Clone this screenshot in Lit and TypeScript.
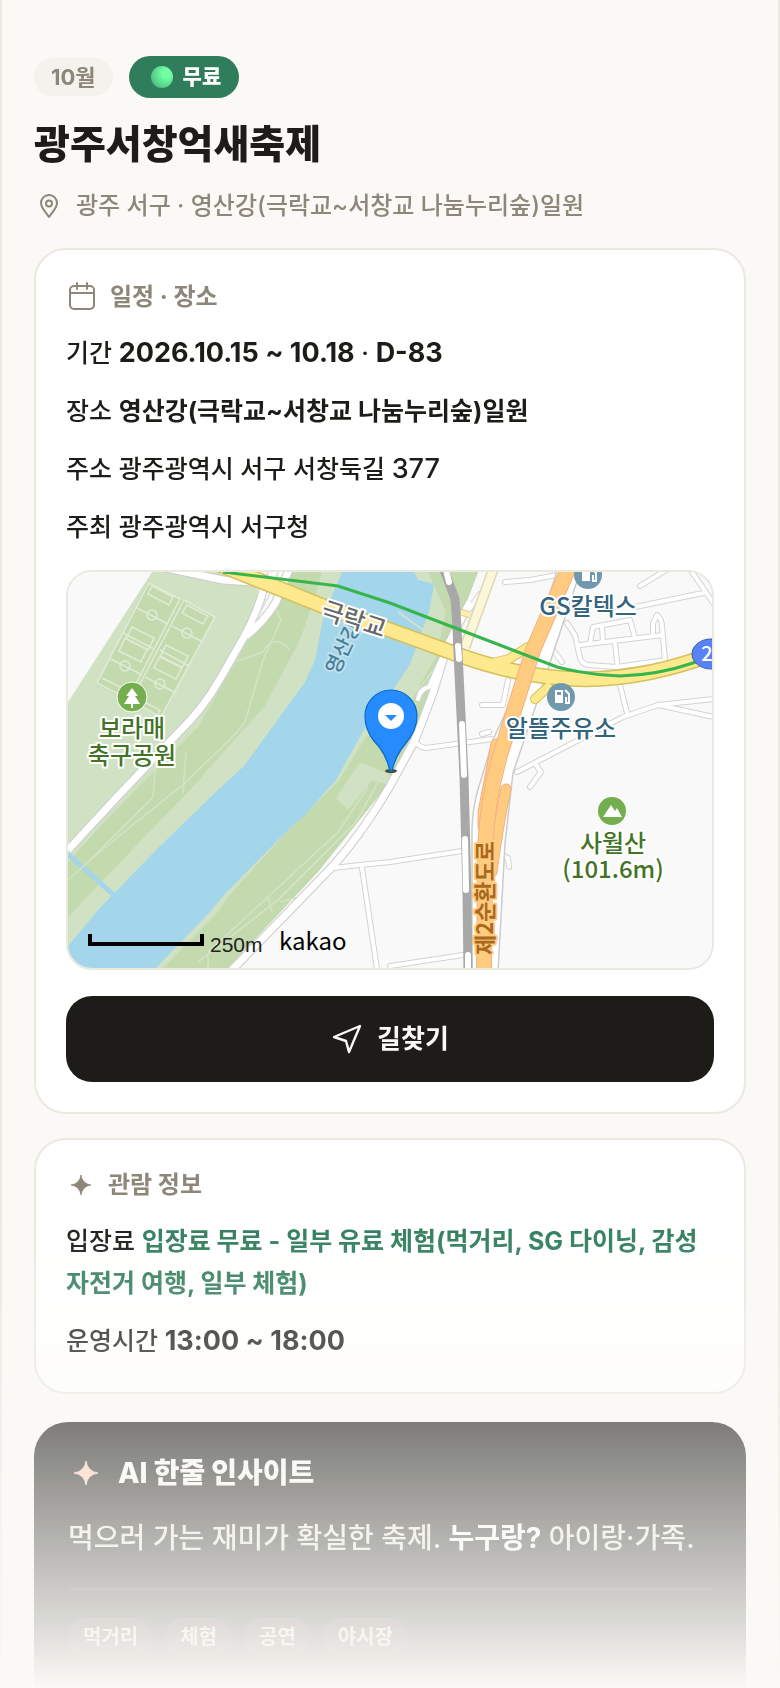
import { LitElement, html, svg, css } from "lit";
import { customElement } from "lit/decorators.js";

const star = svg`<path d="M12 4 Q13 11 20 12 Q13 13 12 20 Q11 13 4 12 Q11 11 12 4Z" fill="currentColor" stroke="currentColor" stroke-width="0.6" stroke-linejoin="round"/>`;

@customElement("festival-map")
class FestivalMap extends LitElement {
  static styles = css`
    :host { display: block; border: 2px solid #ebe8e0; border-radius: 26px; overflow: hidden; background: #f9f9f9; }
    .map { display: block; width: 100%; height: auto; font-family: "Noto Sans CJK KR", sans-serif; font-weight: 400; }
    .minor-edge { fill: none; stroke: #d3d3d3; stroke-width: 6; stroke-linecap: round; stroke-linejoin: round; }
    .minor { fill: none; stroke: #fff; stroke-width: 4; stroke-linecap: round; stroke-linejoin: round; }
    .trail { fill: none; stroke: #d2e3c5; stroke-width: 1.6; }
    .pitch { fill: none; stroke: #dfebd6; stroke-width: 1.6; }
    .label { font-size: 24px; font-weight: 500; text-anchor: middle; paint-order: stroke; stroke: #fff; stroke-width: 4px; stroke-linejoin: round; }
    .park { fill: #437326; }
    .shop { fill: #31647d; }
    .river { fill: #477f99; stroke: #bfe0ec; font-size: 20px; }
    .bridge { fill: #686868; }
    .highway { fill: #a9681c; stroke: #ffcb80; font-size: 22px; font-weight: 700; }
  `;

  render() {
    const minor = [
      "M265 296 L292 293 L322 290 L394 279", "M294 296 L309 397", "M322 394 L395 383",
      "M346 165 Q348 175 358 176 L424 167", "M449 200 L555 145 L590 133 L646 145 M590 133 L646 127",
      "M552 113 L559 141", "M437 10 L462 8 L489 3", "M567 35 L635 21 M624 0 L646 32 M572 14 L598 -2",
      "M499 51 L507 63 L512 86 Q514 92 520 93 L549 95 L597 88 M512 73 L595 63 M522 71 L525 55 L562 48 L567 66 M534 55 L535 70 M547 71 L551 108 M585 63 V51 Q588 45 589 43 Q594 47 594 55 L597 88 M482 74 L494 90",
      "M414 133 L435 133 L440 108", "M468 193 L473 200 L462 215", "M414 162 L421 160",
      "M350 127 Q352 117 361 115 L385 60 L412 22", "M436 284 L440 286 L441 295",
    ];
    return html`
      <svg class="map" viewBox="0 0 644 396" role="img" aria-label="극락교 주변 지도">
        <rect width="644" height="396" fill="#f9f9f9"/>
        <path d="M84 0 H410 L368 110 L325 200 Q230 310 150 396 H0 V130Z" fill="#d0e2c3"/>
        <path d="M80 10 L147 45 L93 145 L28 112Z" fill="#c3daae"/>
        <path d="M185 60 L225 0 H254 Q243 40 230 72 L196 135 L160 175 L120 220 L35 308 L0 345 V290 L40 246 L130 155Z" fill="#c3daae"/>
        <path d="M360 0 H410 L380 80 L330 200 L250 300 L160 396 H95 L150 340 L160 325 L220 258 L270 210 L298 165 L330 150 L368 85 L378 40Z" fill="#c3daae"/>
        <path d="M274 0 H346 L350 8 L366 12 L361 40 L342 92 L316 132 L297 156 L268 208 L237 243 L218 260 L158 321 L140 342 L88 396 H0 V374 L30 338 L88 278 L152 216 L176 194 L237 110 L247 88 L256 42Z" fill="#a4d6eb"/>
        <path d="M0 282 L48 325" stroke="#a4d6eb" stroke-width="5"/>
        <path class="trail" d="M207 35 L213 48 L195 88 L177 150 Q170 160 155 174 L118 210 L50 265 L20 290 M0 308 L20 290 L85 225 L88 190 M115 222 L118 180 M153 188 V216 M166 90 L195 80 Q206 60 222 78 M330 40 L372 70 M340 130 L380 80 M310 210 L288 250 L210 328 L130 390 M300 215 L270 260 L200 325 L140 380 M200 325 L204 340 M212 330 L228 326 M140 384 V396"/>
        <path d="M268 226 L292 190 L316 200 L326 206 L318 212 L304 208 L280 238Z" fill="#d0e2c3"/>
        <g class="pitch">
          <path d="M81 11 L112 27 L60 127 L29 111Z M116 28 L147 45 L93 145 L63 129Z M84 14 L105 25 L101 33 L80 22Z M119 33 L140 44 L135 52 L114 41Z M64 55 L86 66 L80 78 L58 67Z M98 73 L120 84 L114 96 L92 85Z M57 66 L79 77 L73 90 L51 79Z M92 84 L114 95 L108 107 L86 96Z M34 106 L56 117 M70 127 L92 138 L88 147 M55 61 L86 77 M92 78 L121 94 M69 36 L100 52 M104 54 L135 70 M43 87 L74 103 M77 105 L108 121"/>
          <circle cx="84" cy="43" r="5"/><circle cx="119" cy="61" r="5"/><circle cx="57" cy="94" r="5"/><circle cx="92" cy="112" r="5"/>
        </g>
        <path d="M192 0 H224 L208 36 L186 58Z" fill="#f9f9f9"/>
        <path d="M0 278 L50 224 L110 161 Q135 137 152 107 L176 65 Q190 40 197 12 M220 0 L208 30 Q196 50 178 64 M98 -4 L155 8 L185 10" fill="none" stroke="#ccc" stroke-width="9"/>
        <path d="M0 278 L50 224 L110 161 Q135 137 152 107 L176 65 Q190 40 197 12 M220 0 L208 30 Q196 50 178 64 M98 -4 L155 8 L185 10" fill="none" stroke="#fff" stroke-width="7"/>
        <path d="M187 50 L204 18 L210 0 M200 0 L196 16" fill="none" stroke="#ddd" stroke-width="1.5"/>
        ${minor.map((d) => svg`<path class="minor-edge" d=${d}/>`)}
        <path d="M162 400 L265 294 Q295 260 322 214 L347 168 Q358 140 365 121 L379 75 L402 30" fill="none" stroke="#ccc" stroke-width="9"/>
        <path d="M162 400 L265 294 Q295 260 322 214 L347 168 Q358 140 365 121 L379 75 L402 30" fill="none" stroke="#fff" stroke-width="7"/>
        ${minor.map((d) => svg`<path class="minor" d=${d}/>`)}
        <path d="M397 75 L425 -2" stroke="#ded8b8" stroke-width="11"/><path d="M397 75 L425 -2" stroke="#fbf7d7" stroke-width="8"/>
        <path d="M393 40 L402 43" stroke="#ded09a" stroke-width="7"/><path d="M393 40 L402 43" stroke="#ffefac" stroke-width="5"/>
        <path d="M490 -5 L462 88 L425 168 L409 221 Q404 240 404 262 V400 H430 L437 271 L445 201 L472 121 L512 0Z" fill="#fff" stroke="#ccc" stroke-width="1.5"/>
        <path d="M420 92 L441 87 L460 75 M467 127 L480 115" fill="none" stroke="#d5c05c" stroke-width="10" stroke-linecap="round"/>
        <path d="M130 -16 L255 34 L322 58 L388 82 Q450 105 509 107 Q575 109 650 80" fill="none" stroke="#d5c05c" stroke-width="16"/>
        <path d="M420 92 L441 87 L460 75 M467 127 L480 115" fill="none" stroke="#ffe98f" stroke-width="8" stroke-linecap="round"/>
        <path d="M130 -16 L255 34 L322 58 L388 82 Q450 105 509 107 Q575 109 650 80" fill="none" stroke="#ffe98f" stroke-width="13"/>
        <path d="M428 172 Q422 205 415 240 V255 M438 217 Q430 255 424 300" fill="none" stroke="#f4b183" stroke-width="11" stroke-linecap="round"/>
        <path d="M428 172 Q422 205 415 240 V255 M438 217 Q430 255 424 300" fill="none" stroke="#ffcb80" stroke-width="9" stroke-linecap="round"/>
        <path d="M501 -5 L465 78 L439 161 Q417 225 417 290 L416 400" fill="none" stroke="#f4b183" stroke-width="16"/>
        <path d="M501 -5 L465 78 L439 161 Q417 225 417 290 L416 400" fill="none" stroke="#ffcb80" stroke-width="14"/>
        <path d="M375 -5 L387 27 Q389 50 390 81 L396 205 L399 321 L400 400" fill="none" stroke="#a8a8a8" stroke-width="9"/>
        <path d="M378 -2 L381 10 M390 74 L391 87 M394 152 L396 203 M397 267 L398 318 M400 383 V400" stroke="#fff" stroke-width="6" stroke-linecap="round"/>
        <path d="M155 0 L270 14 L322 31 L489 95 Q520 103 552 104 Q590 103 625 91 L646 84" fill="none" stroke="#36b54a" stroke-width="3"/>
        <circle cx="64" cy="125" r="15" fill="#75ae4f" stroke="#fff"/>
        <path d="M64 116 L58 124 H61 L56 132 H63 V136 H65 V132 H72 L67 124 H70Z" fill="#fff"/>
        <text class="label park" x="64" y="165">보라매</text>
        <text class="label park" x="64" y="192">축구공원</text>
        <text class="label river" x="276" y="82" transform="rotate(-65 276 76)">영산강</text>
        <text class="label bridge" x="286" y="56" transform="rotate(18 286 47)">극락교</text>
        <circle cx="520" cy="3" r="14" fill="#7199ad"/>
        <path d="M514 -3 H522 V9 H514Z" fill="#fff"/><path d="M524 -3 L528 1 V9 H525 V3" fill="none" stroke="#fff" stroke-width="2"/>
        <circle cx="493" cy="125" r="14" fill="#7199ad"/>
        <path d="M487 118 H495 V131 H487Z" fill="#fff"/><path d="M489 120 H493 V123 H489Z" fill="#7199ad"/>
        <path d="M497 118 L501 122 V131 H498 V125" fill="none" stroke="#fff" stroke-width="2"/>
        <text class="label shop" x="520" y="43">GS칼텍스</text>
        <text class="label shop" x="493" y="165">알뜰주유소</text>
        <circle cx="544" cy="239" r="14" fill="#75ae4f"/>
        <path d="M535 245 L543 233 L547 239 L549 236 L554 245Z" fill="#fff"/>
        <text class="label park" x="545" y="280">사월산</text>
        <text class="label park" x="545" y="306">(101.6m)</text>
        <text class="label highway" x="417" y="334" transform="rotate(-90 417 326)">제2순환도로</text>
        <ellipse cx="643" cy="82" rx="19" ry="15" fill="#5a82f7" stroke="#355eaa"/>
        <text x="639" y="89" fill="#fff" font-size="20" font-weight="500" text-anchor="middle">2</text>
        <ellipse cx="323" cy="199" rx="6" ry="2" fill="#46513f"/>
        <path d="M322 199 Q318 181 306 169 Q297 158 297 144 A26 26 0 0 1 349 144 Q349 158 338 171 Q327 184 324 199Z" fill="#258bff" stroke="#0868c7" stroke-width="1.2"/>
        <circle cx="323" cy="144" r="13" fill="#fff"/><path d="M317 143 H329 L323 149Z" fill="#258bff"/>
        <path d="M22 362 V372 H134 V362" fill="none" stroke="#000" stroke-width="4"/>
        <text x="142" y="380" font-size="21" font-family="Liberation Sans, sans-serif" fill="#222">250m</text>
        <text x="211" y="378" font-size="24" font-weight="400">kakao</text>
      </svg>`;
  }
}

@customElement("app-root")
class AppRoot extends LitElement {
  static styles = css`
    :host { display: block; height: 100vh; overflow: hidden; background: #faf9f5; color: #1d1c18; font-family: Inter, "Noto Sans CJK KR", sans-serif; font-weight: 500; }
    *, *::before { box-sizing: border-box; }
    p, h1, h2, ul { margin: 0; padding: 0; }
    .page { height: 100%; overflow: hidden; padding: 56px 32px 0; border: solid #ebe8e0; border-width: 0 2px; -webkit-mask-image: linear-gradient(#000 72%, transparent); mask-image: linear-gradient(#000 72%, transparent); }
    .chips { display: flex; align-items: center; gap: 16px; height: 42px; }
    .month { padding: 0 17px; border-radius: 20px; background: #f3f2ed; color: #8c8779; font-size: 22px; font-weight: 700; line-height: 38px; }
    .free { display: flex; align-items: center; gap: 10px; padding: 0 18px 0 22px; border-radius: 21px; background: #2f7d5b; color: #fff; font-size: 21px; font-weight: 800; line-height: 42px; }
    .dot { width: 22px; height: 22px; border-radius: 50%; background: radial-gradient(circle at 70% 35%, #70ffa2 20%, #59d48c 60%, #4d9d87 100%); }
    h1 { margin-top: 18px; font-size: 39px; font-weight: 800; line-height: 56px; }
    .where { display: flex; align-items: center; gap: 12px; margin-top: 18px; color: #8c8779; font-size: 24px; line-height: 32px; }
    .icon { flex: none; fill: none; stroke: currentColor; stroke-width: 2; stroke-linecap: round; stroke-linejoin: round; }
    .card { display: flex; flex-direction: column; gap: 16px; margin-top: 26px; padding: 28px 30px 30px; border: 2px solid #ebe8e0; border-radius: 32px; background: #fff; font-size: 25px; line-height: 42px; }
    .card + .card { margin-top: 24px; padding-top: 26px; }
    .card-title { display: flex; align-items: center; gap: 12px; color: #8c8779; font-size: 24px; font-weight: 700; line-height: 38px; }
    b { font-weight: 700; }
    .num { font-size: 27px; line-height: 1; }
    .fee { color: #2f7d5b; }
    .map-box { margin-top: 6px; }
    .route { display: flex; align-items: center; justify-content: center; gap: 14px; width: 100%; height: 86px; margin-top: 10px; border: 0; border-radius: 26px; background: #1d1c18; color: #faf9f5; font: inherit; font-size: 26px; font-weight: 700; }
    .route .icon { stroke-width: 2.4; }
    .insight { display: flex; flex-direction: column; margin-top: 28px; padding: 30px 34px 60px; border-radius: 34px; background: #1d1c18; color: #e9e7df; }
    .insight h2 { display: flex; align-items: center; gap: 14px; color: #faf9f5; font-size: 28px; font-weight: 800; line-height: 42px; }
    .spark { color: #ffc9b8; }
    .insight p { margin-top: 20px; font-size: 28px; line-height: 48px; }
    .insight b { color: #fff; }
    .tags { display: flex; gap: 12px; margin-top: 26px; padding-top: 28px; border-top: 2px solid #33322d; list-style: none; color: #ffd8cb; font-size: 20px; font-weight: 600; }
    .tags li { padding: 0 15px; border-radius: 20px; background: #382e29; line-height: 38px; }
  `;

  render() {
    return html`
      <main class="page">
        <div class="chips"><span class="month">10월</span><span class="free"><i class="dot"></i>무료</span></div>
        <h1>광주서창억새축제</h1>
        <p class="where">
          <svg class="icon" width="30" height="30" viewBox="0 0 30 30"><path d="M15 26 C11 20 7 17 7 12 A8 8 0 0 1 23 12 C23 17 19 20 15 26Z"/><circle cx="15" cy="12.500" r="3"/></svg>
          광주 서구 · 영산강(극락교~서창교 나눔누리숲)일원
        </p>
        <section class="card">
          <h2 class="card-title"><svg class="icon" width="32" height="32" viewBox="0 0 32 32"><rect x="4" y="5" width="24" height="23" rx="4"/><path d="M4 12 H28 M11 2 V8 M21 2 V8"/></svg>일정 · 장소</h2>
          <p>기간 <b class="num">2026.10.15 ~ 10.18</b> · <b class="num">D-83</b></p>
          <p>장소 <b>영산강(극락교~서창교 나눔누리숲)일원</b></p>
          <p>주소 광주광역시 서구 서창둑길 <span class="num">377</span></p>
          <p>주최 광주광역시 서구청</p>
          <festival-map class="map-box"></festival-map>
          <button class="route" type="button"><svg class="icon" width="32" height="32" viewBox="0 0 32 32"><path d="M29 3 L3 14 L15 18 L18 29Z"/></svg>길찾기</button>
        </section>
        <section class="card">
          <h2 class="card-title"><svg width="30" height="30" viewBox="0 0 24 24">${star}</svg>관람 정보</h2>
          <p>입장료 <b class="fee">입장료 무료 - 일부 유료 체험(먹거리, SG 다이닝, 감성 자전거 여행, 일부 체험)</b></p>
          <p>운영시간 <b class="num">13:00 ~ 18:00</b></p>
        </section>
        <section class="insight">
          <h2><svg class="spark" width="36" height="36" viewBox="0 0 24 24">${star}</svg>AI 한줄 인사이트</h2>
          <p>먹으러 가는 재미가 확실한 축제. <b>누구랑?</b> 아이랑·가족.</p>
          <ul class="tags"><li>먹거리</li><li>체험</li><li>공연</li><li>야시장</li></ul>
        </section>
      </main>`;
  }
}
